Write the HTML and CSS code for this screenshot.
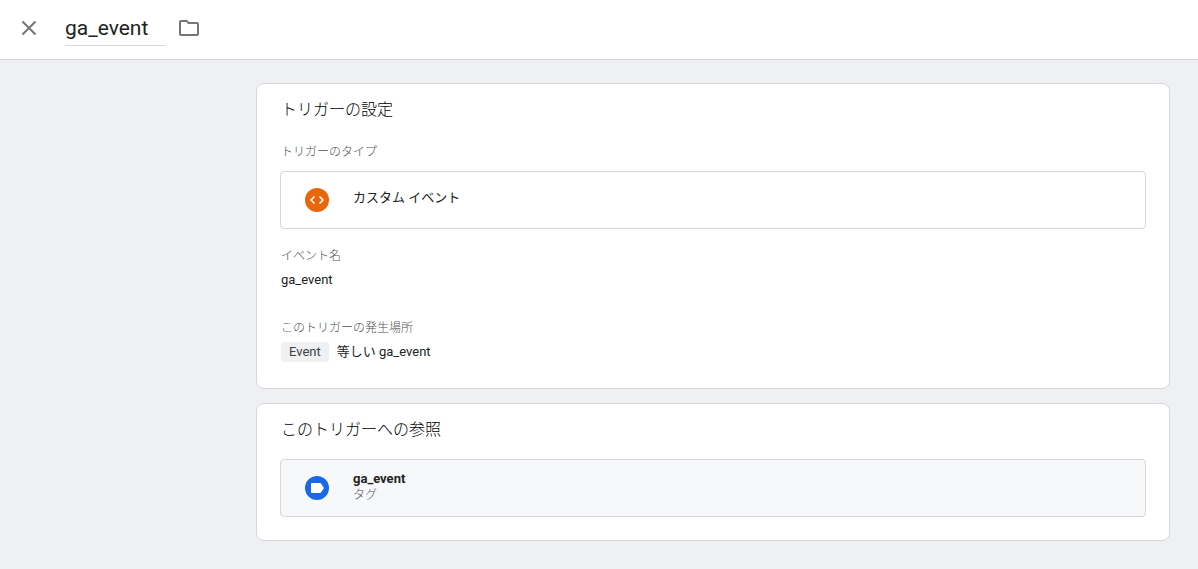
FILE: index.html
```html
<!DOCTYPE html>
<html lang="ja">

<head>
  <meta charset="UTF-8">
  <meta name="viewport" content="width=device-width, initial-scale=1.0">
  <title>ga_event</title>
  <link rel="stylesheet" href="styles.css">
</head>

<body>
  <header class="header">
    <button type="button" class="icon-button" aria-label="閉じる">
      <svg width="24" height="24" viewBox="0 0 24 24" fill="none" stroke="currentColor" stroke-width="2">
        <path d="M5.5 5.5l13 13M18.5 5.5l-13 13" />
      </svg>
    </button>
    <input type="text" class="title-input" value="ga_event" aria-label="トリガー名">
    <button type="button" class="icon-button" aria-label="フォルダ">
      <svg width="24" height="24" viewBox="0 0 24 24" fill="currentColor">
        <path d="M9.17 6l2 2H20v10H4V6h5.17M10 4H4c-1.1 0-1.99.9-1.99 2L2 18c0 1.1.9 2 2 2h16c1.1 0 2-.9 2-2V8c0-1.1-.9-2-2-2h-8l-2-2z" />
      </svg>
    </button>
  </header>

  <main class="content">
    <section class="card">
      <h2>トリガーの設定</h2>
      <h3 class="label">トリガーのタイプ</h3>
      <button type="button" class="item">
        <svg width="24" height="24" viewBox="0 0 24 24">
          <circle cx="12" cy="12" r="12" fill="#e8660c" />
          <path d="M9.5 8.5L6 12l3.5 3.5M14.5 8.5L18 12l-3.5 3.5" fill="none" stroke="#fff" stroke-width="1.5" />
        </svg>
        <span class="item-text type-name">カスタム イベント</span>
      </button>
      <dl class="fields">
        <div class="field">
          <dt class="label">イベント名</dt>
          <dd>ga_event</dd>
        </div>
        <div class="field">
          <dt class="label">このトリガーの発生場所</dt>
          <dd class="condition"><span class="chip">Event</span><span>等しい ga_event</span></dd>
        </div>
      </dl>
    </section>

    <section class="card">
      <h2>このトリガーへの参照</h2>
      <a href="#" class="item reference">
        <svg width="24" height="24" viewBox="0 0 24 24">
          <circle cx="12" cy="12" r="12" fill="#1a68e8" />
          <path d="M7 7h8q.8 0 1.200.7L19 12l-2.800 4.300Q15.800 17 15 17H7q-1 0-1-1V8q0-1 1-1z" fill="#fff" />
        </svg>
        <span class="item-text">
          <strong>ga_event</strong>
          <span class="kind">タグ</span>
        </span>
      </a>
    </section>
  </main>
</body>

</html>
```

FILE: styles.css
```css
:root {
  --bg-color: #eff0f2;
  --card-bg: #fff;
  --border-color: #d5d7dc;
  --text-color: #222;
  --label-color: #505050;
}

* {
  box-sizing: border-box;
}

body {
  margin: 0;
  background-color: var(--bg-color);
  color: var(--text-color);
  font-family: Roboto, "Noto Sans CJK JP", sans-serif;
  font-size: 13px;
  line-height: 20px;
}

.header {
  display: flex;
  align-items: flex-start;
  height: 60px;
  padding: 12px 17px;
  background-color: var(--card-bg);
  border-bottom: 1px solid var(--border-color);
}

.icon-button {
  display: flex;
  padding: 4px 0;
  border: none;
  background: none;
  color: #757575;
  cursor: pointer;
}

.title-input {
  width: 100px;
  height: 34px;
  margin: 0 12px 0 24px;
  padding: 0 0 2px;
  border: none;
  border-bottom: 1px solid var(--border-color);
  background: none;
  color: var(--text-color);
  font-family: inherit;
  font-size: 21px;
}

.content {
  display: flex;
  flex-direction: column;
  gap: 14px;
  padding: 23px 28px 28px 256px;
}

.card {
  padding: 14px 23px 23px;
  background-color: var(--card-bg);
  border: 1px solid var(--border-color);
  border-radius: 8px;
}

h2 {
  margin: 0 0 17px;
  padding-left: 1px;
  color: #000;
  font-size: 16px;
  font-weight: 300;
  line-height: 24px;
}

.label {
  margin: 0;
  color: var(--label-color);
  font-size: 12px;
  font-weight: 300;
  line-height: 16px;
}

h3.label {
  margin: 22px 0 11px;
  padding-left: 1px;
}

.item {
  display: flex;
  align-items: center;
  gap: 24px;
  width: 100%;
  height: 58px;
  padding: 0 24px;
  border: 1px solid var(--border-color);
  border-radius: 4px;
  background-color: var(--card-bg);
  color: var(--text-color);
  font-family: inherit;
  font-size: 13px;
  text-align: left;
  text-decoration: none;
  cursor: pointer;
}

.item-text {
  display: flex;
  flex-direction: column;
  line-height: 16px;
}

.type-name {
  padding-bottom: 4px;
}

.reference {
  background-color: #f6f8fa;
}

.reference .item-text {
  padding-bottom: 2px;
}

.kind {
  color: var(--label-color);
  font-size: 12px;
  font-weight: 300;
}

.fields {
  display: flex;
  flex-direction: column;
  gap: 30px;
  margin: 19px 0 3px;
  padding-left: 1px;
}

.field {
  display: flex;
  flex-direction: column;
  gap: 6px;
}

dd {
  margin: 0;
}

.condition {
  display: flex;
  gap: 8px;
}

.chip {
  padding: 0 8px;
  background-color: var(--bg-color);
  border-radius: 2px;
  color: #3c4043;
}
```
